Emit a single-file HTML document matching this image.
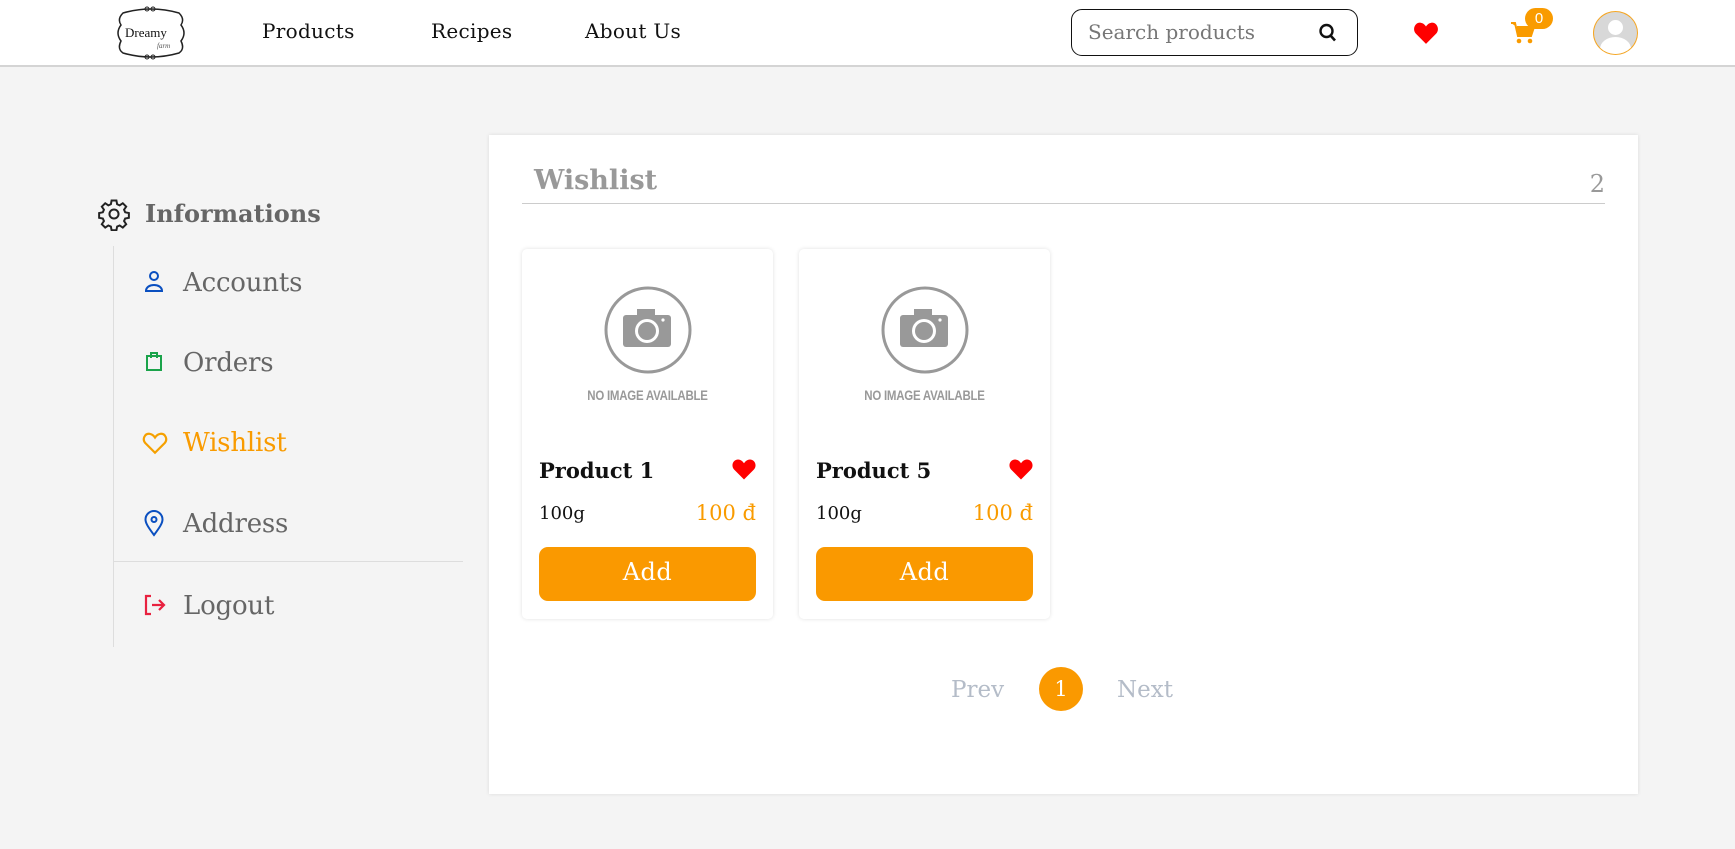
<!DOCTYPE html>
<html><head><meta charset="utf-8"><style>
*{margin:0;padding:0;box-sizing:border-box}
body{width:1735px;height:849px;background:#f4f4f4;font-family:"DejaVu Serif","Liberation Serif",serif;position:relative;overflow:hidden}
.a{position:absolute}
header{position:absolute;left:0;top:0;width:1735px;height:67px;background:#fff;border-bottom:2px solid #d4d4d4}
.nav{font-size:20px;color:#111;top:19px;letter-spacing:.3px}
.side{font-size:26px;color:#666;left:183px;letter-spacing:-.2px}
.card{position:absolute;top:249px;width:251px;height:370px;background:#fff;border-radius:5px;box-shadow:0 0 4px rgba(0,0,0,.12)}
.card .t{position:absolute;left:17px;top:209px;font-size:21px;font-weight:bold;color:#111}
.card .w{position:absolute;left:17px;top:254px;font-size:18px;color:#111}
.card .p{position:absolute;right:17px;top:252px;font-size:21px;color:#f99b00}
.card .b{position:absolute;left:17px;top:298px;width:217px;height:54px;background:#fa9900;border-radius:9px;color:#fff;font-size:24px;text-align:center;line-height:50px;letter-spacing:.5px}
.card .n{position:absolute;left:0;width:100%;top:138px;text-align:center;font-family:"Liberation Sans",sans-serif;font-weight:bold;font-size:14px;color:#999;letter-spacing:-.3px;transform:scaleX(.82)}
</style></head><body>
<header>
<svg class="a" style="left:111px;top:5px" width="80" height="56" viewBox="0 0 80 56"><path d="M12 8 Q40 0 68 8 Q74 14 70 20 Q76 28 70 36 Q74 44 68 48 Q40 56 12 48 Q6 44 10 36 Q4 28 10 20 Q6 14 12 8Z" fill="none" stroke="#222" stroke-width="1.5"/><circle cx="36" cy="4" r="2" fill="none" stroke="#222"/><circle cx="42" cy="4" r="2" fill="none" stroke="#222"/><circle cx="36" cy="52" r="2" fill="none" stroke="#222"/><circle cx="42" cy="52" r="2" fill="none" stroke="#222"/><text x="14" y="32" font-family="Liberation Serif" font-size="13" fill="#111">Dreamy</text><text x="46" y="43" font-family="Liberation Serif" font-style="italic" font-size="7" fill="#555">farm</text></svg>
<div class="a nav" style="left:262px">Products</div>
<div class="a nav" style="left:431px">Recipes</div>
<div class="a nav" style="left:585px">About Us</div>
<div class="a" style="left:1071px;top:9px;width:287px;height:47px;border:1.5px solid #111;border-radius:11px"></div>
<div class="a" style="left:1088px;top:20px;font-size:20px;color:#777">Search products</div>
<svg class="a" style="left:1318px;top:22px" width="20" height="22" viewBox="0 0 20 22"><circle cx="8.5" cy="9" r="6" fill="none" stroke="#111" stroke-width="2.4"/><path d="M12.5 13.5 L17 18.5" stroke="#111" stroke-width="2.6"/></svg>
<svg class="a" style="left:1413px;top:21px" width="26" height="24" viewBox="0 0 24 22"><path d="M12 21 L2.5 11.5 C-1 7.5 2 1 7 1.5 C9.5 1.8 11 3.5 12 5 C13 3.5 14.5 1.8 17 1.5 C22 1 25 7.5 21.5 11.5Z" fill="#f00"/></svg>
<svg class="a" style="left:1510px;top:21px" width="26" height="24" viewBox="0 0 26 24"><path d="M1 2 H5 L8 15 H21 L24 6 H7" fill="#f99b00" stroke="#f99b00" stroke-width="2"/><circle cx="9" cy="20" r="2.3" fill="#f99b00"/><circle cx="20" cy="20" r="2.3" fill="#f99b00"/></svg>
<div class="a" style="left:1525px;top:8px;width:28px;height:21px;border-radius:11px;background:#f99b00;color:#fff;font-family:'Liberation Sans',sans-serif;font-size:15px;text-align:center;line-height:21px">0</div>
<div class="a" style="left:1593px;top:11px;width:45px;height:44px;border-radius:50%;border:1.5px solid #f5a623;background:#d8d8d8;overflow:hidden"><div class="a" style="left:14px;top:8px;width:15px;height:15px;border-radius:50%;background:#fff"></div><div class="a" style="left:6px;top:25px;width:31px;height:24px;border-radius:50% 50% 0 0;background:#fff"></div></div>
</header>

<svg class="a" style="left:97px;top:197px" width="34" height="34" viewBox="0 0 24 24" fill="none" stroke="#222" stroke-width="1.4"><circle cx="12" cy="12" r="3.2"/><path d="M10.3 2.5h3.4l.5 2.6 1.8.8 2.2-1.5 2.4 2.4-1.5 2.2.8 1.8 2.6.5v3.4l-2.6.5-.8 1.8 1.5 2.2-2.4 2.4-2.2-1.5-1.8.8-.5 2.6h-3.4l-.5-2.6-1.8-.8-2.2 1.5-2.4-2.4 1.5-2.2-.8-1.8-2.6-.5v-3.4l2.6-.5.8-1.8-1.5-2.2 2.4-2.4 2.2 1.5 1.8-.8z"/></svg>
<div class="a" style="left:145px;top:199px;font-size:24px;font-weight:bold;color:#666">Informations</div>
<div class="a" style="left:113px;top:246px;width:1px;height:401px;background:#ddd"></div>
<div class="a" style="left:113px;top:561px;width:350px;height:1px;background:#ddd"></div>
<svg class="a" style="left:144px;top:270px" width="20" height="24" viewBox="0 0 20 24" fill="none" stroke="#0a4fc0" stroke-width="2"><circle cx="10" cy="6" r="4"/><path d="M2 21 C2 13 18 13 18 21Z"/></svg>
<div class="a side" style="top:268px">Accounts</div>
<svg class="a" style="left:145px;top:350px" width="18" height="22" viewBox="0 0 18 22" fill="none" stroke="#1aa34a" stroke-width="2"><rect x="2" y="6" width="14" height="14"/><path d="M6 8 V3 H12 V8"/></svg>
<div class="a side" style="top:348px">Orders</div>
<svg class="a" style="left:142px;top:431px" width="26" height="24" viewBox="0 0 24 22" fill="none" stroke="#f5a000" stroke-width="2"><path d="M12 20 L3 11 C0 7.5 2.5 2 7 2.5 C9.3 2.8 11 4.5 12 6 C13 4.5 14.7 2.8 17 2.5 C21.5 2 24 7.5 21 11Z"/></svg>
<div class="a side" style="top:428px;color:#f99b00">Wishlist</div>
<svg class="a" style="left:144px;top:510px" width="20" height="27" viewBox="0 0 20 27" fill="none" stroke="#0a4fc0" stroke-width="2"><path d="M10 25 C4 17 1.5 13 1.5 9.5 A8.5 8.5 0 0 1 18.5 9.5 C18.5 13 16 17 10 25Z"/><circle cx="10" cy="9.5" r="2.5"/></svg>
<div class="a side" style="top:509px">Address</div>
<svg class="a" style="left:143px;top:594px" width="24" height="22" viewBox="0 0 24 22" fill="none" stroke="#e8213f" stroke-width="2.2"><path d="M8 2 H3 V20 H8"/><path d="M9 11 H21 M16 6 L21 11 L16 16"/></svg>
<div class="a side" style="top:591px">Logout</div>

<div class="a" style="left:489px;top:135px;width:1149px;height:659px;background:#fff;box-shadow:0 0 4px rgba(0,0,0,.1)">
<div class="a" style="left:45px;top:30px;font-size:27px;font-weight:bold;color:#999">Wishlist</div>
<div class="a" style="right:33px;top:35px;font-size:24px;color:#999">2</div>
<div class="a" style="left:33px;top:68px;width:1083px;height:1px;background:#ccc"></div>
</div>

<div class="card" style="left:522px">
<svg class="a" style="left:81px;top:36px" width="90" height="90" viewBox="0 0 90 90"><circle cx="45" cy="45" r="42" fill="none" stroke="#999" stroke-width="3"/><rect x="20" y="30" width="48" height="32" rx="3" fill="#999"/><rect x="34" y="24" width="18" height="8" fill="#999"/><circle cx="44" cy="46" r="12" fill="#fff"/><circle cx="44" cy="46" r="9" fill="#999"/><circle cx="60" cy="35" r="1.6" fill="#fff"/></svg>
<div class="n">NO IMAGE AVAILABLE</div>
<div class="t">Product 1</div>
<svg class="a" style="left:209px;top:209px" width="26" height="22" viewBox="0 0 24 21"><path d="M12 20.5 L2.5 11 C-1 7 2 1 7 1.5 C9.5 1.8 11 3.5 12 5 C13 3.5 14.5 1.8 17 1.5 C22 1 25 7 21.5 11Z" fill="#f00"/></svg>
<div class="w">100g</div><div class="p">100 đ</div>
<div class="b">Add</div>
</div>
<div class="card" style="left:799px">
<svg class="a" style="left:81px;top:36px" width="90" height="90" viewBox="0 0 90 90"><circle cx="45" cy="45" r="42" fill="none" stroke="#999" stroke-width="3"/><rect x="20" y="30" width="48" height="32" rx="3" fill="#999"/><rect x="34" y="24" width="18" height="8" fill="#999"/><circle cx="44" cy="46" r="12" fill="#fff"/><circle cx="44" cy="46" r="9" fill="#999"/><circle cx="60" cy="35" r="1.6" fill="#fff"/></svg>
<div class="n">NO IMAGE AVAILABLE</div>
<div class="t">Product 5</div>
<svg class="a" style="left:209px;top:209px" width="26" height="22" viewBox="0 0 24 21"><path d="M12 20.5 L2.5 11 C-1 7 2 1 7 1.5 C9.5 1.8 11 3.5 12 5 C13 3.5 14.5 1.8 17 1.5 C22 1 25 7 21.5 11Z" fill="#f00"/></svg>
<div class="w">100g</div><div class="p">100 đ</div>
<div class="b">Add</div>
</div>

<div class="a" style="left:951px;top:677px;font-size:23px;color:#b4bcc8">Prev</div>
<div class="a" style="left:1039px;top:667px;width:44px;height:44px;border-radius:50%;background:#fa9900;color:#fff;font-size:21px;text-align:center;line-height:44px">1</div>
<div class="a" style="left:1117px;top:677px;font-size:23px;color:#b4bcc8">Next</div>
</body></html>
